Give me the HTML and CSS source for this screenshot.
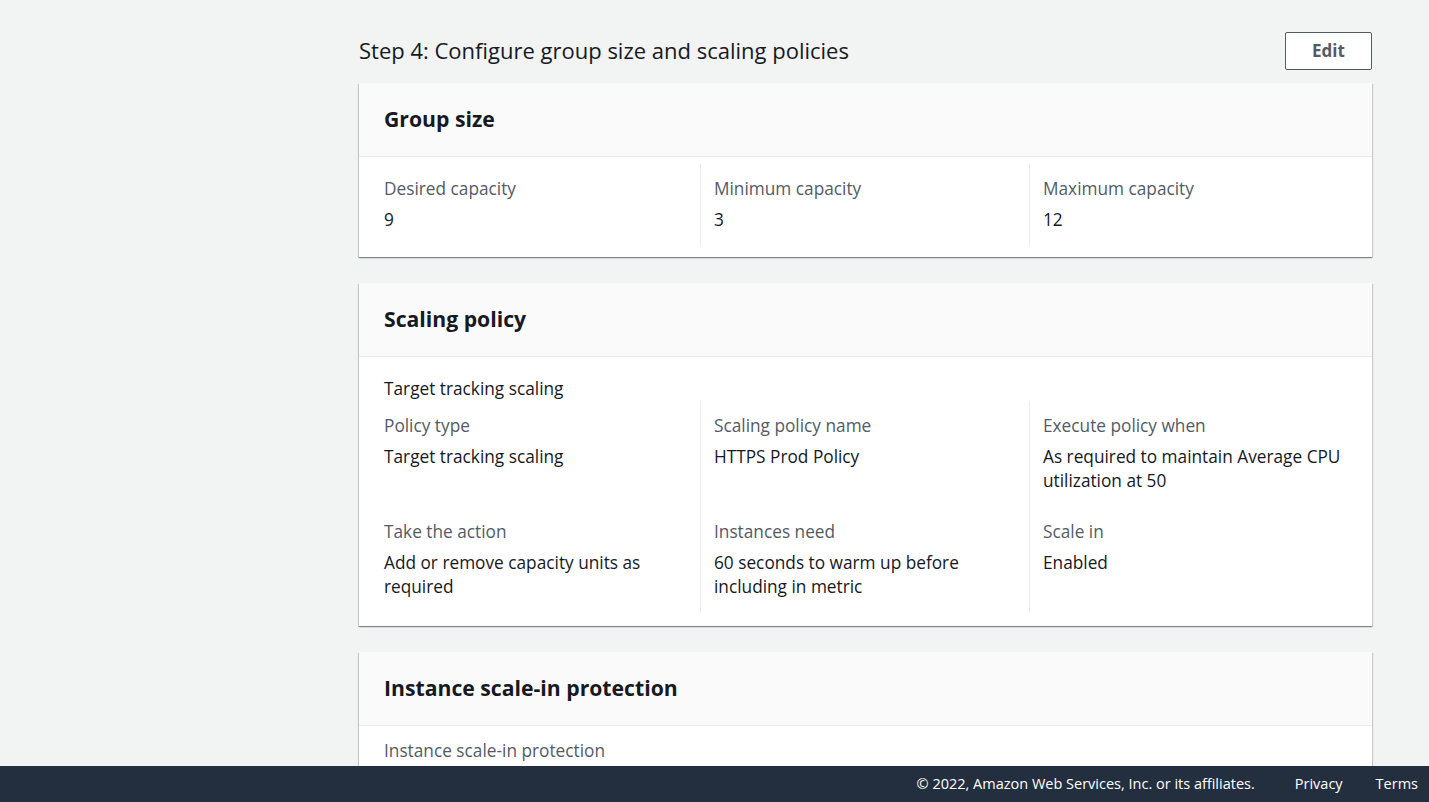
FILE: index.html
```html
<!DOCTYPE html>
<html lang="en">
<head>
<meta charset="utf-8">
<title>Review</title>
<link rel="stylesheet" href="styles.css">
</head>
<body>
<div class="app">
  <main class="main">
    <aside class="side"></aside>
    <section class="content">
      <div class="step-head">
        <h2 class="step-title">Step 4: Configure group size and scaling policies</h2>
        <button class="btn">Edit</button>
      </div>

      <div class="card">
        <div class="card-head"><h3 class="card-title">Group size</h3></div>
        <div class="card-body">
          <div class="cols">
            <div class="cell"><div class="label">Desired capacity</div><div class="value">9</div></div>
            <div class="cell"><div class="label">Minimum capacity</div><div class="value">3</div></div>
            <div class="cell"><div class="label">Maximum capacity</div><div class="value">12</div></div>
          </div>
        </div>
      </div>

      <div class="card">
        <div class="card-head"><h3 class="card-title">Scaling policy</h3></div>
        <div class="card-body card-body-tall">
          <div class="intro">Target tracking scaling</div>
          <div class="cols">
            <div class="cell"><div class="label">Policy type</div><div class="value">Target tracking scaling</div></div>
            <div class="cell"><div class="label">Scaling policy name</div><div class="value">HTTPS Prod Policy</div></div>
            <div class="cell"><div class="label">Execute policy when</div><div class="value">As required to maintain Average CPU utilization at 50</div></div>
            <div class="cell"><div class="label">Take the action</div><div class="value">Add or remove capacity units as required</div></div>
            <div class="cell"><div class="label">Instances need</div><div class="value">60 seconds to warm up before including in metric</div></div>
            <div class="cell"><div class="label">Scale in</div><div class="value">Enabled</div></div>
          </div>
        </div>
      </div>

      <div class="card">
        <div class="card-head"><h3 class="card-title">Instance scale-in protection</h3></div>
        <div class="card-body card-body-flat">
          <div class="cols cols-one">
            <div class="cell"><div class="label">Instance scale-in protection</div></div>
          </div>
        </div>
      </div>
    </section>
  </main>
  <footer class="footer">
    <span class="copy">© 2022, Amazon Web Services, Inc. or its affiliates.</span>
    <a class="foot-link privacy" href="#">Privacy</a>
    <a class="foot-link terms" href="#">Terms</a>
  </footer>
</div>
</body>
</html>
```

FILE: styles.css
```css
* { box-sizing: border-box; }

html, body {
  margin: 0;
  padding: 0;
  height: 100%;
}

body {
  background: #f2f3f3;
  font-family: "Open Sans", "Noto Sans", Arial, sans-serif;
  font-size: 17.25px;
  line-height: 24px;
  color: #16191f;
}

.app {
  height: 100vh;
  display: flex;
  flex-direction: column;
}

.main {
  flex: 1;
  min-height: 0;
  overflow: hidden;
  display: flex;
}

.side {
  width: 359px;
  flex: none;
}

.content {
  width: 1013px;
  flex: none;
  padding-top: 32px;
}

.step-head {
  display: flex;
  align-items: center;
  justify-content: space-between;
  height: 38px;
  margin-bottom: 13px;
}

.step-title {
  margin: 0 0 2px;
  font-size: 22px;
  font-weight: 400;
  line-height: 28px;
  color: #16191f;
}

.btn {
  width: 87px;
  height: 38px;
  background: #fff;
  border: 1px solid #545b64;
  border-radius: 2px;
  font-family: inherit;
  font-size: 17px;
  font-weight: 700;
  color: #545b64;
  padding: 0 0 1px;
  cursor: pointer;
}

.card {
  background: #fff;
  box-shadow: 0 1px 1px 0 rgba(0, 28, 36, 0.3), 1px 1px 1px 0 rgba(0, 28, 36, 0.15), -1px 1px 1px 0 rgba(0, 28, 36, 0.15);
  margin-bottom: 26px;
}

.card-head {
  height: 74px;
  background: #fafafa;
  border-bottom: 1px solid #eaeded;
  display: flex;
  align-items: center;
  padding: 0 25px 2px;
}

.card-title {
  margin: 0;
  font-size: 21.2px;
  font-weight: 700;
  line-height: 28px;
  color: #16191f;
}

.card-body {
  padding: 7px 14px 11px 12px;
}

.card-body-tall {
  padding-bottom: 13px;
}

.card-body-flat {
  padding-top: 0;
}

.intro {
  padding: 13px 13px 0;
}

.cols {
  display: grid;
  grid-template-columns: repeat(3, 1fr);
}

.cols-one {
  grid-template-columns: 1fr;
}

.cell {
  padding: 13px 13px 14px;
}

.cols .cell:nth-child(3n+2),
.cols .cell:nth-child(3n+3) {
  border-left: 1px solid #eaeded;
}

.cols-one .cell:nth-child(n) {
  border-left: none;
}

.label {
  color: #545b64;
  margin-bottom: 7px;
}

.value {
  color: #16191f;
}

.footer {
  flex: none;
  height: 36px;
  background: #232f3e;
  display: flex;
  align-items: center;
  justify-content: flex-end;
  padding-right: 11px;
  font-size: 14.5px;
  color: #fff;
}

.foot-link {
  color: #fff;
  text-decoration: none;
}

.privacy {
  margin-left: 40px;
}

.terms {
  margin-left: 33px;
}
```
